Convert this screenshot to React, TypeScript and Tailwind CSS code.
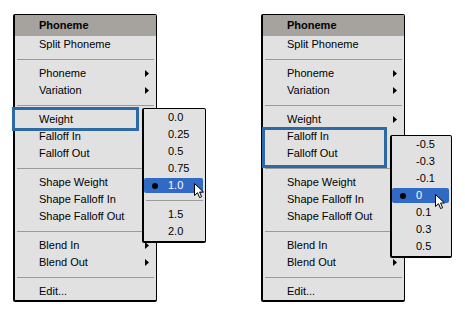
import React from "react";

const Arrow = () => (
  <svg width="4" height="7" viewBox="0 0 4 7" className="block">
    <polygon points="0,0 4,3.5 0,7" fill="#000" />
  </svg>
);

const Cursor = () => (
  <svg width="11" height="16" viewBox="0 0 11 16" className="block">
    <path
      d="M0.5 0.5 L0.5 12.5 L3.5 9.7 L5.6 14.6 L7.6 13.7 L5.6 9 L9.5 9 Z"
      fill="#fff"
      stroke="#000"
      strokeWidth="1"
      strokeLinejoin="miter"
    />
  </svg>
);

const Row = ({ label, arrow }: { label: string; arrow?: boolean }) => (
  <div className="h-[17px] flex items-center justify-between pl-[24px] pr-[7px] leading-[17px]">
    <span>{label}</span>
    {arrow && <Arrow />}
  </div>
);

const Sep = () => (
  <div className="h-[12px] flex items-center px-[2px]">
    <div className="h-px w-full bg-[#9a9a9a]" />
  </div>
);

const SubRow = ({ label, selected }: { label: string; selected?: boolean }) => (
  <div className="h-[17px] py-px pr-[2px]">
    <div
      className={
        "h-[15px] relative flex items-center pl-[24px] rounded-[2px] leading-[15px] " +
        (selected ? "bg-[#316ac5] text-white" : "")
      }
    >
      {selected && (
        <div className="absolute left-[8px] top-[5px] w-[6px] h-[6px] rounded-full bg-black" />
      )}
      <span>{label}</span>
    </div>
  </div>
);

const SubSep = () => (
  <div className="h-[12px] flex items-center px-[2px]">
    <div className="h-px w-full bg-[#9a9a9a]" />
  </div>
);

function MainMenu({ weightArrow }: { weightArrow: boolean }) {
  return (
    <div className="w-[144px] bg-[#e1e1e1] border-black border-t border-r border-l-2 border-b-2 rounded-[2px]">
      <div className="h-[21px] bg-[#a6a29e] flex items-center pl-[24px] font-bold leading-[21px]">
        Phoneme
      </div>
      <Row label="Split Phoneme" />
      <Sep />
      <Row label="Phoneme" arrow />
      <Row label="Variation" arrow />
      <Sep />
      <Row label="Weight" arrow={weightArrow} />
      <Row label="Falloff In" />
      <Row label="Falloff Out" />
      <Sep />
      <Row label="Shape Weight" />
      <Row label="Shape Falloff In" />
      <Row label="Shape Falloff Out" />
      <Sep />
      <Row label="Blend In" arrow />
      <Row label="Blend Out" arrow />
      <Sep />
      <Row label="Edit..." />
    </div>
  );
}

export default function App() {
  return (
    <div className="w-[465px] h-[318px] bg-white text-black text-[11px] font-['Liberation_Sans',Arial,sans-serif] flex items-start pl-[13px] pt-[14px] gap-[104px]">
      {/* Left figure */}
      <div className="relative">
        <MainMenu weightArrow={false} />
        <div className="absolute left-[-1px] top-[93px] w-[127px] h-[24px] border-[3px] border-[#2d6aa5]" />
        <div className="absolute left-[129px] top-[94px] w-[64px] bg-[#e1e1e1] border-black border-t border-r border-l-2 border-b-2 rounded-[2px] pb-px">
          <SubRow label="0.0" />
          <SubRow label="0.25" />
          <SubRow label="0.5" />
          <SubRow label="0.75" />
          <SubRow label="1.0" selected />
          <SubSep />
          <SubRow label="1.5" />
          <SubRow label="2.0" />
          <div className="absolute left-[50px] top-[74px]">
            <Cursor />
          </div>
        </div>
      </div>
      {/* Right figure */}
      <div className="relative">
        <MainMenu weightArrow />
        <div className="absolute left-[1px] top-[113px] w-[125px] h-[41px] border-[3px] border-[#2d6aa5]" />
        <div className="absolute left-[129px] top-[121px] w-[62px] bg-[#e1e1e1] border-black border-t border-r border-l-2 border-b-2 rounded-[2px] pb-px">
          <SubRow label="-0.5" />
          <SubRow label="-0.3" />
          <SubRow label="-0.1" />
          <SubRow label="0" selected />
          <SubRow label="0.1" />
          <SubRow label="0.3" />
          <SubRow label="0.5" />
          <div className="absolute left-[43px] top-[58px]">
            <Cursor />
          </div>
        </div>
      </div>
    </div>
  );
}
